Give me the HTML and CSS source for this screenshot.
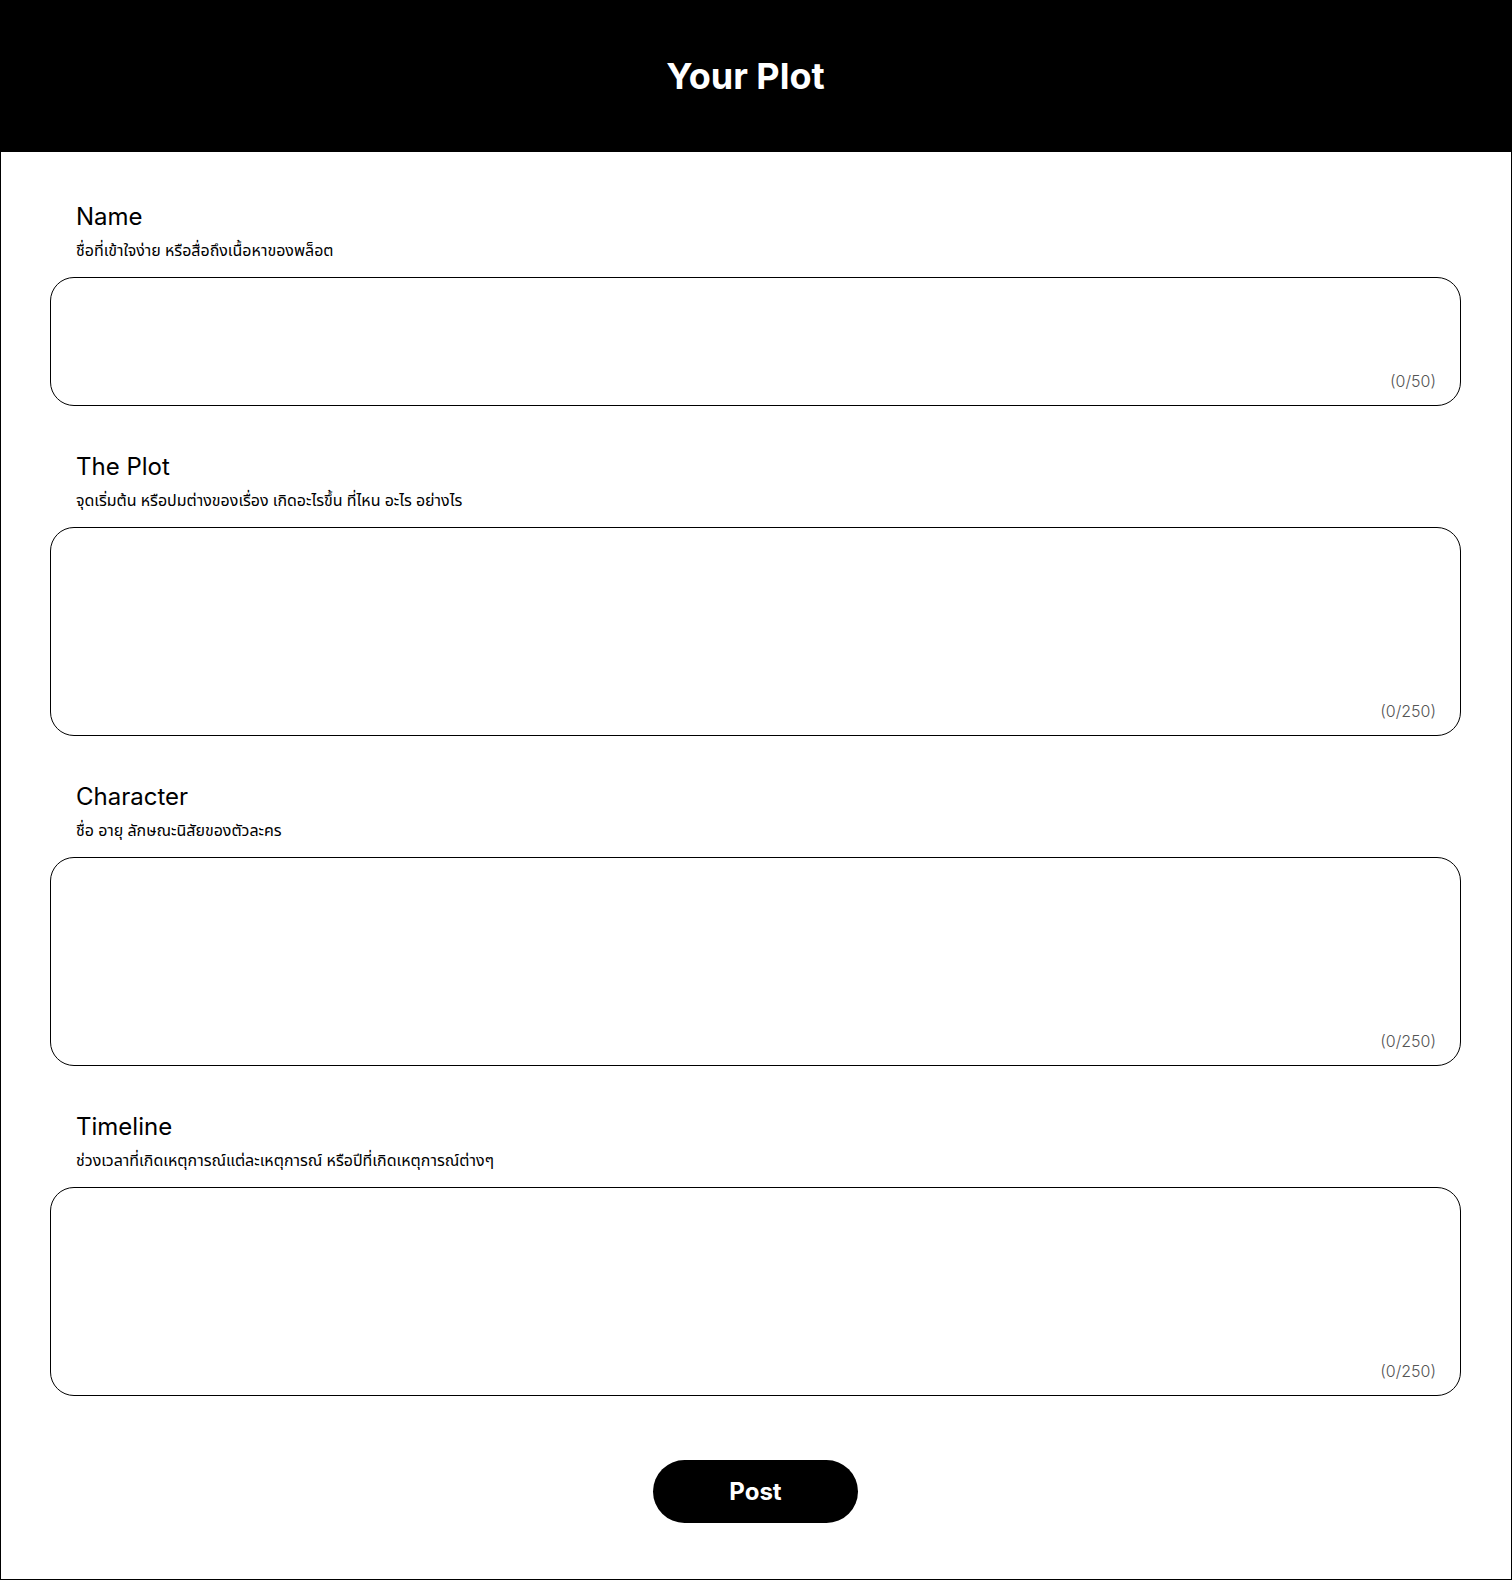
FILE: index.html
```html
<!DOCTYPE html>
<html lang="th">
<head>
<meta charset="utf-8">
<title>Your Plot</title>
<link rel="stylesheet" href="styles.css">
</head>
<body>
<div class="page">
  <header class="topbar">
    <h1 class="title">Your Plot</h1>
  </header>
  <main class="form">
    <section class="field">
      <h2 class="label">Name</h2>
      <p class="hint">ชื่อที่เข้าใจง่าย หรือสื่อถึงเนื้อหาของพล็อต</p>
      <div class="box box-short">
        <textarea class="input" maxlength="50"></textarea>
        <span class="count">(0/50)</span>
      </div>
    </section>
    <section class="field">
      <h2 class="label">The Plot</h2>
      <p class="hint">จุดเริ่มต้น หรือปมต่างของเรื่อง เกิดอะไรขึ้น ที่ไหน อะไร อย่างไร</p>
      <div class="box">
        <textarea class="input" maxlength="250"></textarea>
        <span class="count">(0/250)</span>
      </div>
    </section>
    <section class="field">
      <h2 class="label">Character</h2>
      <p class="hint">ชื่อ อายุ ลักษณะนิสัยของตัวละคร</p>
      <div class="box">
        <textarea class="input" maxlength="250"></textarea>
        <span class="count">(0/250)</span>
      </div>
    </section>
    <section class="field">
      <h2 class="label">Timeline</h2>
      <p class="hint">ช่วงเวลาที่เกิดเหตุการณ์แต่ละเหตุการณ์ หรือปีที่เกิดเหตุการณ์ต่างๆ</p>
      <div class="box">
        <textarea class="input" maxlength="250"></textarea>
        <span class="count">(0/250)</span>
      </div>
    </section>
    <div class="actions">
      <button class="post" type="button">Post</button>
    </div>
  </main>
</div>
</body>
</html>
```
FILE: styles.css
```css
html, body {
  margin: 0;
  padding: 0;
  background: #fff;
}

.page {
  width: 1512px;
  height: 1580px;
  box-sizing: border-box;
  border: 1px solid #000;
  display: flex;
  flex-direction: column;
  font-family: Inter, "Noto Sans Thai", "Noto Sans Thai UI", "Noto Sans", sans-serif;
  color: #000;
}

.topbar {
  height: 151px;
  flex: none;
  background: #000;
  display: flex;
  align-items: center;
  justify-content: center;
  padding-right: 21px;
  padding-bottom: 2px;
  box-sizing: border-box;
}

.title {
  margin: 0;
  color: #fff;
  font-size: 36px;
  line-height: 44px;
  font-weight: 700;
}

.form {
  display: flex;
  flex-direction: column;
  padding: 50px 50px 0 49px;
}

.field {
  display: flex;
  flex-direction: column;
}

.field + .field {
  margin-top: 46px;
}

.label {
  margin: 0 0 0 26px;
  font-size: 24px;
  line-height: 29px;
  font-weight: 400;
}

.hint {
  margin: 9px 0 0 26px;
  font-family: "Noto Sans Thai", "Noto Sans Thai UI", Inter, "Noto Sans", sans-serif;
  font-size: 16px;
  line-height: 22px;
  font-weight: 400;
}

.box {
  margin-top: 15px;
  height: 209px;
  box-sizing: border-box;
  border: 1px solid #000;
  border-radius: 24px;
  display: flex;
  flex-direction: column;
  padding: 14px 24px 14px 25px;
}

.box-short {
  height: 129px;
}

.input {
  flex: 1;
  border: none;
  outline: none;
  resize: none;
  background: transparent;
  font-family: inherit;
  font-size: 16px;
  padding: 0;
  margin: 0;
}

.count {
  align-self: flex-end;
  font-size: 16px;
  line-height: 19px;
  font-weight: 300;
  color: #555;
}

.actions {
  display: flex;
  justify-content: center;
  margin-top: 64px;
}

.post {
  width: 205px;
  height: 63px;
  border: none;
  border-radius: 32px;
  background: #000;
  color: #fff;
  font-family: Inter, sans-serif;
  font-size: 24px;
  font-weight: 700;
  cursor: pointer;
}
```
